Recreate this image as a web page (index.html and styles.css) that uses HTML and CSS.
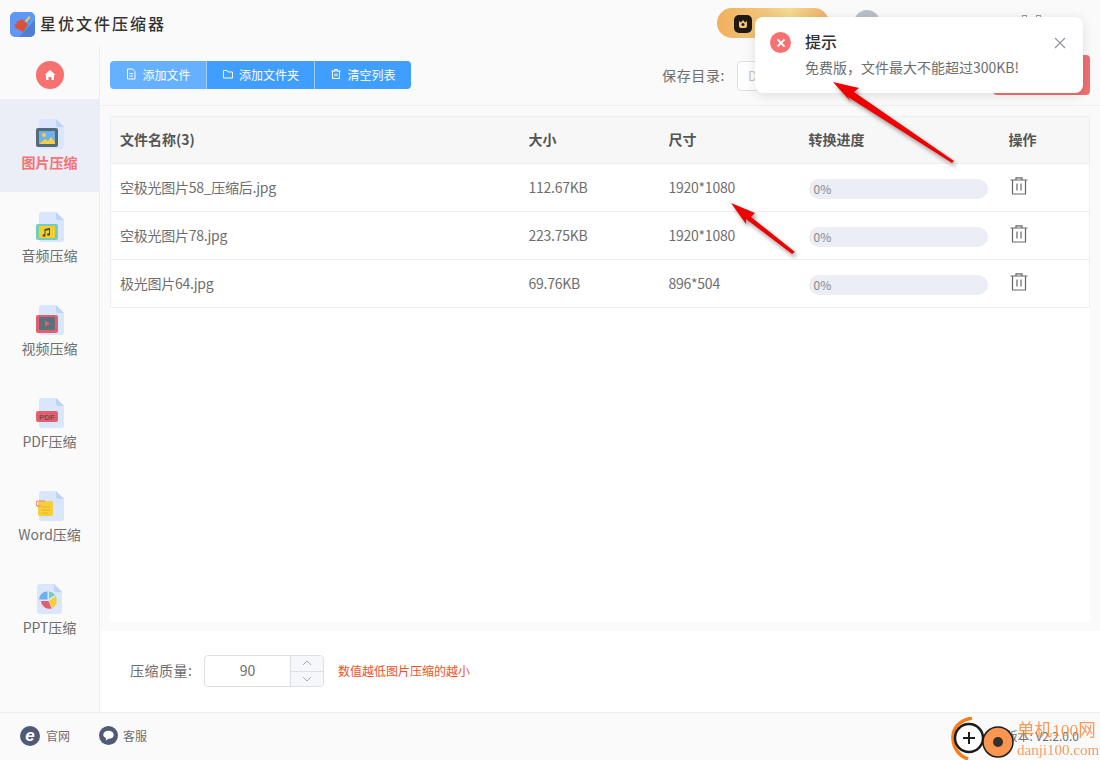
FILE: index.html
```html
<!DOCTYPE html>
<html lang="zh-CN">
<head>
  <meta charset="UTF-8" />
  <title>星优文件压缩器</title>
  <link rel="stylesheet" href="styles.css">
</head>
<body>
  <div class="app">
    <header class="topbar">
      <svg class="logo" viewBox="0 0 25 25">
        <rect width="25" height="25" rx="5" fill="#5f97f5"/>
        <path d="M25 8V20a5 5 0 0 1-5 5H9z" fill="#4f7fd0"/>
        <path d="M15 9l4-5 1.500 1.200-4 5z" fill="#f6cf45"/>
        <path d="M12 7l6 6-5 7-9-5 2-1-2-2 3 0-1-2z" fill="#d9533a"/>
      </svg>
      <div class="app-name">星优文件压缩器</div>
      <div class="top-right">
        <div class="vip-pill">
          <svg class="vip-icon" viewBox="0 0 18 18">
            <rect width="18" height="18" rx="5" fill="#1d1a16"/>
            <path d="M5 6l2 1.500L9 5l2 2.500L13 6v5a2 2 0 0 1-2 2H7a2 2 0 0 1-2-2z" fill="#f3c56f"/>
            <circle cx="9" cy="9.500" r="1.500" fill="#1d1a16"/>
          </svg>
        </div>
        <div class="avatar"></div>
        <div class="win-btns"><i></i><i></i></div>
      </div>
    </header>

    <div class="body-row">
      <aside class="sidebar">
        <div class="home-row">
          <div class="home-btn">
            <svg viewBox="0 0 12 12" width="12" height="12"><path d="M6 1L11.500 6H10v5H7.500V8h-3v3H2V6H.5z" fill="#fff"/></svg>
          </div>
        </div>
        <a class="side-item active">
          <svg class="side-icon" viewBox="0 0 28 30">
            <path d="M6 0H20L28 8V27a3 3 0 0 1-3 3H6a3 3 0 0 1-3-3V3a3 3 0 0 1 3-3z" fill="#d9e6fb"/>
            <path d="M20 0L28 8H22a2 2 0 0 1-2-2z" fill="#bcd4f8"/>
            <rect y="9" width="22" height="19" rx="2" fill="#566b7a"/>
            <rect x="3" y="12" width="16" height="13" fill="#6fb0ec"/>
            <circle cx="8" cy="16" r="2" fill="#f6cf45"/>
            <path d="M3 25l6-5 3 2 3-4 4 5v2z" fill="#f6cf45"/>
          </svg>
          <span>图片压缩</span>
        </a>
        <a class="side-item">
          <svg class="side-icon" viewBox="0 0 28 30">
            <path d="M6 0H20L28 8V27a3 3 0 0 1-3 3H6a3 3 0 0 1-3-3V3a3 3 0 0 1 3-3z" fill="#d9e6fb"/>
            <path d="M20 0L28 8H22a2 2 0 0 1-2-2z" fill="#bcd4f8"/>
            <rect y="12" width="22" height="16" rx="2" fill="#74cdb6"/>
            <rect x="3" y="14" width="16" height="12" rx="1" fill="#f6cf2f"/>
            <path d="M8.500 17l5.500-1v6.500a1.500 1.300 0 1 1-1-1.200V18l-3.500.7v4.800a1.500 1.300 0 1 1-1-1.200z" fill="#3f4a52"/>
          </svg>
          <span>音频压缩</span>
        </a>
        <a class="side-item">
          <svg class="side-icon" viewBox="0 0 28 30">
            <path d="M6 0H20L28 8V27a3 3 0 0 1-3 3H6a3 3 0 0 1-3-3V3a3 3 0 0 1 3-3z" fill="#d9e6fb"/>
            <path d="M20 0L28 8H22a2 2 0 0 1-2-2z" fill="#bcd4f8"/>
            <rect y="10" width="22" height="18" rx="2" fill="#e0616d"/>
            <rect x="3" y="12" width="16" height="13" rx="1" fill="#5e6f7c"/>
            <path d="M9 15.500l5 3-5 3z" fill="#e0616d"/>
          </svg>
          <span>视频压缩</span>
        </a>
        <a class="side-item">
          <svg class="side-icon" viewBox="0 0 28 30">
            <path d="M6 0H20L28 8V27a3 3 0 0 1-3 3H6a3 3 0 0 1-3-3V3a3 3 0 0 1 3-3z" fill="#d9e6fb"/>
            <path d="M20 0L28 8H22a2 2 0 0 1-2-2z" fill="#bcd4f8"/>
            <rect y="13" width="22" height="11" rx="2" fill="#e0616d"/>
            <text x="11" y="21.500" class="pdf-mark" text-anchor="middle">PDF</text>
          </svg>
          <span>PDF压缩</span>
        </a>
        <a class="side-item">
          <svg class="side-icon" viewBox="0 0 28 30">
            <path d="M6 0H20L28 8V27a3 3 0 0 1-3 3H6a3 3 0 0 1-3-3V3a3 3 0 0 1 3-3z" fill="#d9e6fb"/>
            <path d="M20 0L28 8H22a2 2 0 0 1-2-2z" fill="#bcd4f8"/>
            <rect x="2" y="10" width="15" height="15" rx="2" fill="#f6cf3a"/>
            <path d="M6 16h8M6 19h8M6 22h6" stroke="#e3b52a" stroke-width="1"/>
            <path d="M9 10H2.500a2 2 0 0 0 0 5H5" fill="none" stroke="#ec7d86" stroke-width="1.200"/>
          </svg>
          <span>Word压缩</span>
        </a>
        <a class="side-item">
          <svg class="side-icon" viewBox="0 0 28 30">
            <path d="M4 0H18L26 8V27a3 3 0 0 1-3 3H4a3 3 0 0 1-3-3V3a3 3 0 0 1 3-3z" fill="#d9e6fb"/>
            <path d="M18 0L26 8H20a2 2 0 0 1-2-2z" fill="#bcd4f8"/>
            <path d="M11.500 7.500v8H3a8 8 0 0 1 8.500-8z" fill="#6fb0f2"/>
            <path d="M13 7.500a8 8 0 0 1 6 3.500l-6 3.500z" fill="#74cdb6"/>
            <path d="M19.800 12a9 9 0 0 1-3.300 12L13 17z" fill="#f6cf2f"/>
            <path d="M12.500 17l3.200 7.500A8.500 8.500 0 0 1 5 17z" fill="#e0616d"/>
          </svg>
          <span>PPT压缩</span>
        </a>
      </aside>

      <main class="content">
        <div class="toolbar">
          <div class="btn-group">
            <button class="tool-btn first">
              <svg viewBox="0 0 12 12"><path d="M2.500 1H7.500L10 3.500V11H2.500zM4.500 5.500h3.500M4.500 8h3.500" fill="none" stroke="#fff"/></svg>
              添加文件
            </button>
            <button class="tool-btn">
              <svg viewBox="0 0 12 12"><path d="M1.500 2.500H5L6 4H10.500V10H1.500z" fill="none" stroke="#fff"/></svg>
              添加文件夹
            </button>
            <button class="tool-btn">
              <svg viewBox="0 0 12 12"><path d="M1.500 3h9M4.500 3V1.500h3V3M2.500 3V10.500H9.500V3M5 5.500v3M7 5.500v3" fill="none" stroke="#fff"/></svg>
              清空列表
            </button>
          </div>
          <label class="save-label">保存目录:</label>
          <div class="save-input">D</div>
          <button class="start-btn"></button>
        </div>

        <div class="list-wrap">
          <div class="list-panel">
            <table class="file-table">
              <thead>
                <tr>
                  <th class="col-name">文件名称(3)</th>
                  <th class="col-size">大小</th>
                  <th class="col-dim">尺寸</th>
                  <th class="col-prog">转换进度</th>
                  <th>操作</th>
                </tr>
              </thead>
              <tbody>
                <tr>
                  <td>空极光图片58_压缩后.jpg</td>
                  <td>112.67KB</td>
                  <td>1920*1080</td>
                  <td><div class="progress">0%</div></td>
                  <td><svg class="trash" viewBox="0 0 18 18"><path d="M.5 3h17M6 3V.8h6V3M2.500 3V17h13V3M7 6.500v7M11 6.500v7" fill="none" stroke="#666" stroke-width="1.200"/></svg></td>
                </tr>
                <tr>
                  <td>空极光图片78.jpg</td>
                  <td>223.75KB</td>
                  <td>1920*1080</td>
                  <td><div class="progress">0%</div></td>
                  <td><svg class="trash" viewBox="0 0 18 18"><path d="M.5 3h17M6 3V.8h6V3M2.500 3V17h13V3M7 6.500v7M11 6.500v7" fill="none" stroke="#666" stroke-width="1.200"/></svg></td>
                </tr>
                <tr>
                  <td>极光图片64.jpg</td>
                  <td>69.76KB</td>
                  <td>896*504</td>
                  <td><div class="progress">0%</div></td>
                  <td><svg class="trash" viewBox="0 0 18 18"><path d="M.5 3h17M6 3V.8h6V3M2.500 3V17h13V3M7 6.500v7M11 6.500v7" fill="none" stroke="#666" stroke-width="1.200"/></svg></td>
                </tr>
              </tbody>
            </table>
          </div>
        </div>

        <div class="options">
          <span class="opt-label">压缩质量:</span>
          <div class="stepper">
            <div class="step-value">90</div>
            <div class="step-btns">
              <div class="step-btn"><svg viewBox="0 0 10 6" width="10" height="6"><path d="M1 5l4-4 4 4" fill="none" stroke="#a8abb2"/></svg></div>
              <div class="step-btn"><svg viewBox="0 0 10 6" width="10" height="6"><path d="M1 1l4 4 4-4" fill="none" stroke="#a8abb2"/></svg></div>
            </div>
          </div>
          <span class="opt-hint">数值越低图片压缩的越小</span>
        </div>
      </main>
    </div>

    <footer class="bottombar">
      <a class="foot-link">
        <svg viewBox="0 0 20 20" width="20" height="20">
          <circle cx="10" cy="10" r="10" fill="#4f5b76"/>
          <text x="10" y="15" class="ie-mark" text-anchor="middle">e</text>
        </svg>
        官网
      </a>
      <a class="foot-link service">
        <svg viewBox="0 0 20 20" width="19" height="19">
          <circle cx="10" cy="10" r="10" fill="#4f5b76"/>
          <path d="M10 5c3.500 0 5.500 1.800 5.500 4.300S13.500 13.500 10 13.500l-3 2 .6-2.600C5.700 12.300 4.500 11 4.500 9.300 4.500 6.800 6.500 5 10 5z" fill="#fff"/>
        </svg>
        客服
      </a>
      <span class="version">版本: V2.2.0.0</span>
    </footer>
  </div>

  <div class="notice">
    <div class="notice-icon">
      <svg viewBox="0 0 10 10" width="10" height="10"><path d="M1.500 1.500l7 7M8.500 1.500l-7 7" stroke="#fff" stroke-width="1.800"/></svg>
    </div>
    <div class="notice-body">
      <div class="notice-title">提示</div>
      <div class="notice-msg">免费版，文件最大不能超过300KB!</div>
    </div>
    <svg class="notice-close" viewBox="0 0 12 12" width="12" height="12"><path d="M1 1l10 10M11 1L1 11" stroke="#909399" stroke-width="1.100"/></svg>
  </div>

  <svg class="arrows" viewBox="0 0 1100 760" width="1100" height="760">
    <polygon points="833,82 859,88 854,92 954,161 952,163 848,97 851,102" fill="#f00000"/>
    <polygon points="731,203 755,213 751,217 795,252 792,254 746,219 746,224" fill="#f00000"/>
  </svg>

  <div class="watermark">
    <svg class="wm-logo" viewBox="0 0 66 46" width="66" height="46">
      <path d="M21 1C9 3 1 11 2 22c.5 9 6 17 15 20" fill="none" stroke="#fb7d1a" stroke-width="3.500"/>
      <circle cx="18" cy="21" r="14" fill="#fff" stroke="#1c1c1c" stroke-width="2.500"/>
      <path d="M18 15v12M12 21h12" stroke="#1c1c1c" stroke-width="2"/>
      <circle cx="47" cy="25" r="15" fill="#fb9650" stroke="#1c1c1c" stroke-width="1.500"/>
      <circle cx="47" cy="25" r="5" fill="#33302e"/>
    </svg>
    <div class="wm-text">
      <div class="wm-cn">单机100网</div>
      <div class="wm-en">danji100.com</div>
    </div>
  </div>
</body>
</html>
```

FILE: styles.css
```css
:root {
  --page-bg: #fafafa;
  --line: #ebeef5;
  --text: #6e6e6e;
  --blue: #409eff;
  --blue-light: #66b1ff;
}
* {
  margin: 0; padding: 0; box-sizing: border-box;
}
html, body {
  height: 760px;
  overflow: hidden;
}
body {
  font-family: "Noto Sans CJK SC", "Noto Sans", sans-serif;
  background-color: var(--page-bg);
  color: var(--text);
  position: relative;
}
.app {
  height: 760px;
  display: flex;
  flex-direction: column;
}

/* top bar */
.topbar {
  height: 46px;
  flex: none;
  display: flex;
  align-items: flex-start;
  padding: 12px 0 0 10px;
}
.logo {
  width: 25px; height: 25px;
  flex: none;
}
.app-name {
  margin-left: 5px;
  font-size: 16px;
  line-height: 22px;
  font-weight: 500;
  letter-spacing: 2px;
  color: #333;
}
.top-right {
  margin-left: auto;
  margin-top: -4px;
  display: flex;
  align-items: flex-start;
}
.vip-pill {
  width: 112px; height: 30px;
  border-radius: 15px;
  background: linear-gradient(90deg, #f0b05e 0%, #f3c57c 40%, #f6da92 65%, #eeb064 100%);
  padding: 7px 0 0 17px;
}
.vip-icon {
  width: 18px; height: 18px;
  display: block;
}
.avatar {
  width: 26px; height: 26px;
  border-radius: 50%;
  background-color: #b9bfcb;
  margin: 2px 0 0 25px;
}
.win-btns {
  display: flex;
  gap: 9px;
  margin: 7px 59px 0 142px;
}
.win-btns i {
  display: block;
  width: 5px; height: 5px;
  border: 1px solid #999;
}

/* sidebar */
.body-row {
  flex: 1;
  min-height: 0;
  display: flex;
}
.sidebar {
  width: 100px;
  flex: none;
  border-right: 1px solid #eeeeee;
}
.home-row {
  height: 53px;
  padding-top: 15px;
  display: flex;
  justify-content: center;
}
.home-btn {
  width: 28px; height: 28px;
  border-radius: 50%;
  background-color: #f87171;
  display: flex;
  align-items: center;
  justify-content: center;
}
.side-item {
  height: 93px;
  padding-top: 20px;
  display: flex;
  flex-direction: column;
  align-items: center;
  font-size: 14px;
  line-height: 20px;
  color: var(--text);
}
.side-item span {
  margin-top: 3px;
}
.side-item.active {
  background-color: #ebeef7;
  color: #f87171;
  font-weight: 700;
}
.side-icon {
  width: 28px; height: 30px;
  display: block;
}
.pdf-mark {
  font-family: "Liberation Sans", sans-serif;
  font-size: 8px;
  font-weight: 700;
  fill: #7a4a52;
}

/* content */
.content {
  flex: 1;
  min-width: 0;
  display: flex;
  flex-direction: column;
}
.toolbar {
  height: 60px;
  flex: none;
  border-bottom: 1px solid #eeeeee;
  display: flex;
  align-items: center;
  padding: 0 10px;
  position: relative;
}
.btn-group {
  display: flex;
  margin-top: -1px;
  margin-right: auto;
  border-radius: 4px;
  overflow: hidden;
}
.tool-btn {
  height: 28px;
  display: flex;
  align-items: center;
  justify-content: center;
  gap: 5px;
  border: none;
  border-left: 1px solid #a0cfff;
  background-color: var(--blue);
  color: #fff;
  font-family: inherit;
  font-size: 12px;
  width: 108px;
  padding-bottom: 2px;
}
.tool-btn:last-child {
  width: 97px;
}
.tool-btn.first {
  width: 96px;
  border-left: none;
  background-color: var(--blue-light);
}
.tool-btn svg {
  width: 12px; height: 12px;
  flex: none;
}
.save-label {
  font-size: 14px;
  letter-spacing: 0.6px;
  color: var(--text);
  margin: 0 12px 2px 0;
}
.save-input {
  width: 250px; height: 30px;
  border: 1px solid #dcdfe6;
  border-radius: 4px;
  background-color: #fff;
  font-size: 13px;
  line-height: 28px;
  padding-left: 10px;
  color: #c0c4cc;
  margin-right: 103px;
}
.start-btn {
  position: absolute;
  right: 10px; top: 9px;
  width: 97px; height: 40px;
  border: none;
  border-radius: 4px;
  background-color: #f07070;
}

.list-wrap {
  flex: 1;
  min-height: 0;
  padding: 10px 10px 9px;
}
.list-panel {
  height: 100%;
  background-color: #fff;
}
.file-table {
  width: 100%;
  table-layout: fixed;
  border-collapse: collapse;
  font-size: 14px;
}
.file-table th, .file-table td {
  text-align: left;
  padding: 0 0 2px 9px;
  border: 1px solid var(--line);
  border-width: 1px 0;
}
.file-table th {
  height: 47px;
  background-color: #f7f7f7;
  color: #555;
  font-weight: 700;
}
.file-table td {
  height: 48px;
  padding-bottom: 1px;
  color: var(--text);
  letter-spacing: -0.25px;
}
.file-table tr > :first-child {
  border-left: 1px solid var(--line);
}
.file-table tr > :last-child {
  border-right: 1px solid var(--line);
}
.col-name { width: 409px; }
.col-size, .col-dim { width: 140px; }
.col-prog { width: 200px; }
.progress {
  width: 179px; height: 20px;
  border-radius: 10px;
  background-color: #ebeef5;
  font-size: 12px;
  line-height: 20px;
  padding-left: 5px;
  color: #888;
  margin-top: 3px;
  letter-spacing: 0;
}
.trash {
  width: 18px; height: 18px;
  display: block;
  margin: -3px 0 0 1px;
}

/* options */
.options {
  height: 81px;
  flex: none;
  background-color: #fff;
  display: flex;
  align-items: center;
  padding: 0 0 1px 30px;
}
.opt-label {
  font-size: 14px;
  letter-spacing: 0.5px;
  width: 74px;
  margin-bottom: 2px;
}
.stepper {
  width: 120px; height: 32px;
  border: 1px solid #dcdfe6;
  border-radius: 4px;
  display: flex;
  overflow: hidden;
}
.step-value {
  flex: 1;
  text-align: center;
  font-size: 14px;
  line-height: 28px;
}
.step-btns {
  width: 33px;
  border-left: 1px solid #dcdfe6;
  display: flex;
  flex-direction: column;
  background-color: #f5f7fa;
}
.step-btn {
  flex: 1;
  display: flex;
  align-items: center;
  justify-content: center;
}
.step-btn + .step-btn {
  border-top: 1px solid #dcdfe6;
}
.opt-hint {
  margin: 0 0 2px 14px;
  font-size: 12px;
  color: #f0502a;
}

/* footer */
.bottombar {
  height: 48px;
  flex: none;
  border-top: 1px solid #eeeeee;
  display: flex;
  align-items: center;
  padding: 0 20px 2px;
  font-size: 12px;
  gap: 29px;
}
.foot-link {
  display: flex;
  align-items: center;
  gap: 6px;
  color: var(--text);
}
.foot-link.service {
  gap: 5px;
}
.ie-mark {
  font-family: "Liberation Sans", sans-serif;
  font-size: 17px;
  font-style: italic;
  font-weight: 700;
  fill: #fff;
}
.version {
  margin-left: auto;
  margin-right: 1px;
  font-size: 12px;
}

/* overlays */
.notice {
  position: absolute;
  left: 755px; top: 17px;
  width: 328px; height: 76px;
  background-color: #fff;
  border-radius: 8px;
  box-shadow: 0 2px 12px rgba(0,0,0,0.12);
  display: flex;
  padding: 13px 0 0 15px;
}
.notice-icon {
  width: 21px; height: 21px;
  border-radius: 50%;
  background-color: #f87171;
  display: flex;
  align-items: center;
  justify-content: center;
  margin-top: 2px;
}
.notice-body {
  margin-left: 14px;
}
.notice-title {
  font-size: 16px;
  line-height: 22px;
  font-weight: 500;
  color: #303133;
}
.notice-msg {
  font-size: 14px;
  line-height: 20px;
  margin-top: 5px;
  color: var(--text);
}
.notice-close {
  position: absolute;
  right: 17px; top: 20px;
}
.arrows {
  position: absolute;
  left: 0; top: 0;
  pointer-events: none;
  filter: drop-shadow(2px 3px 2px rgba(0,0,0,0.4));
}
.watermark {
  position: absolute;
  left: 951px; top: 717px;
  display: flex;
}
.wm-logo {
  flex: none;
}
.wm-text {
  color: #f98a3c;
  font-family: "Liberation Serif", "Noto Sans CJK SC", serif;
  opacity: 0.85;
}
.wm-cn {
  font-size: 17.5px;
  line-height: 24px;
  padding-top: 1px;
}
.wm-en {
  font-size: 15px;
  line-height: 16px;
}
```
